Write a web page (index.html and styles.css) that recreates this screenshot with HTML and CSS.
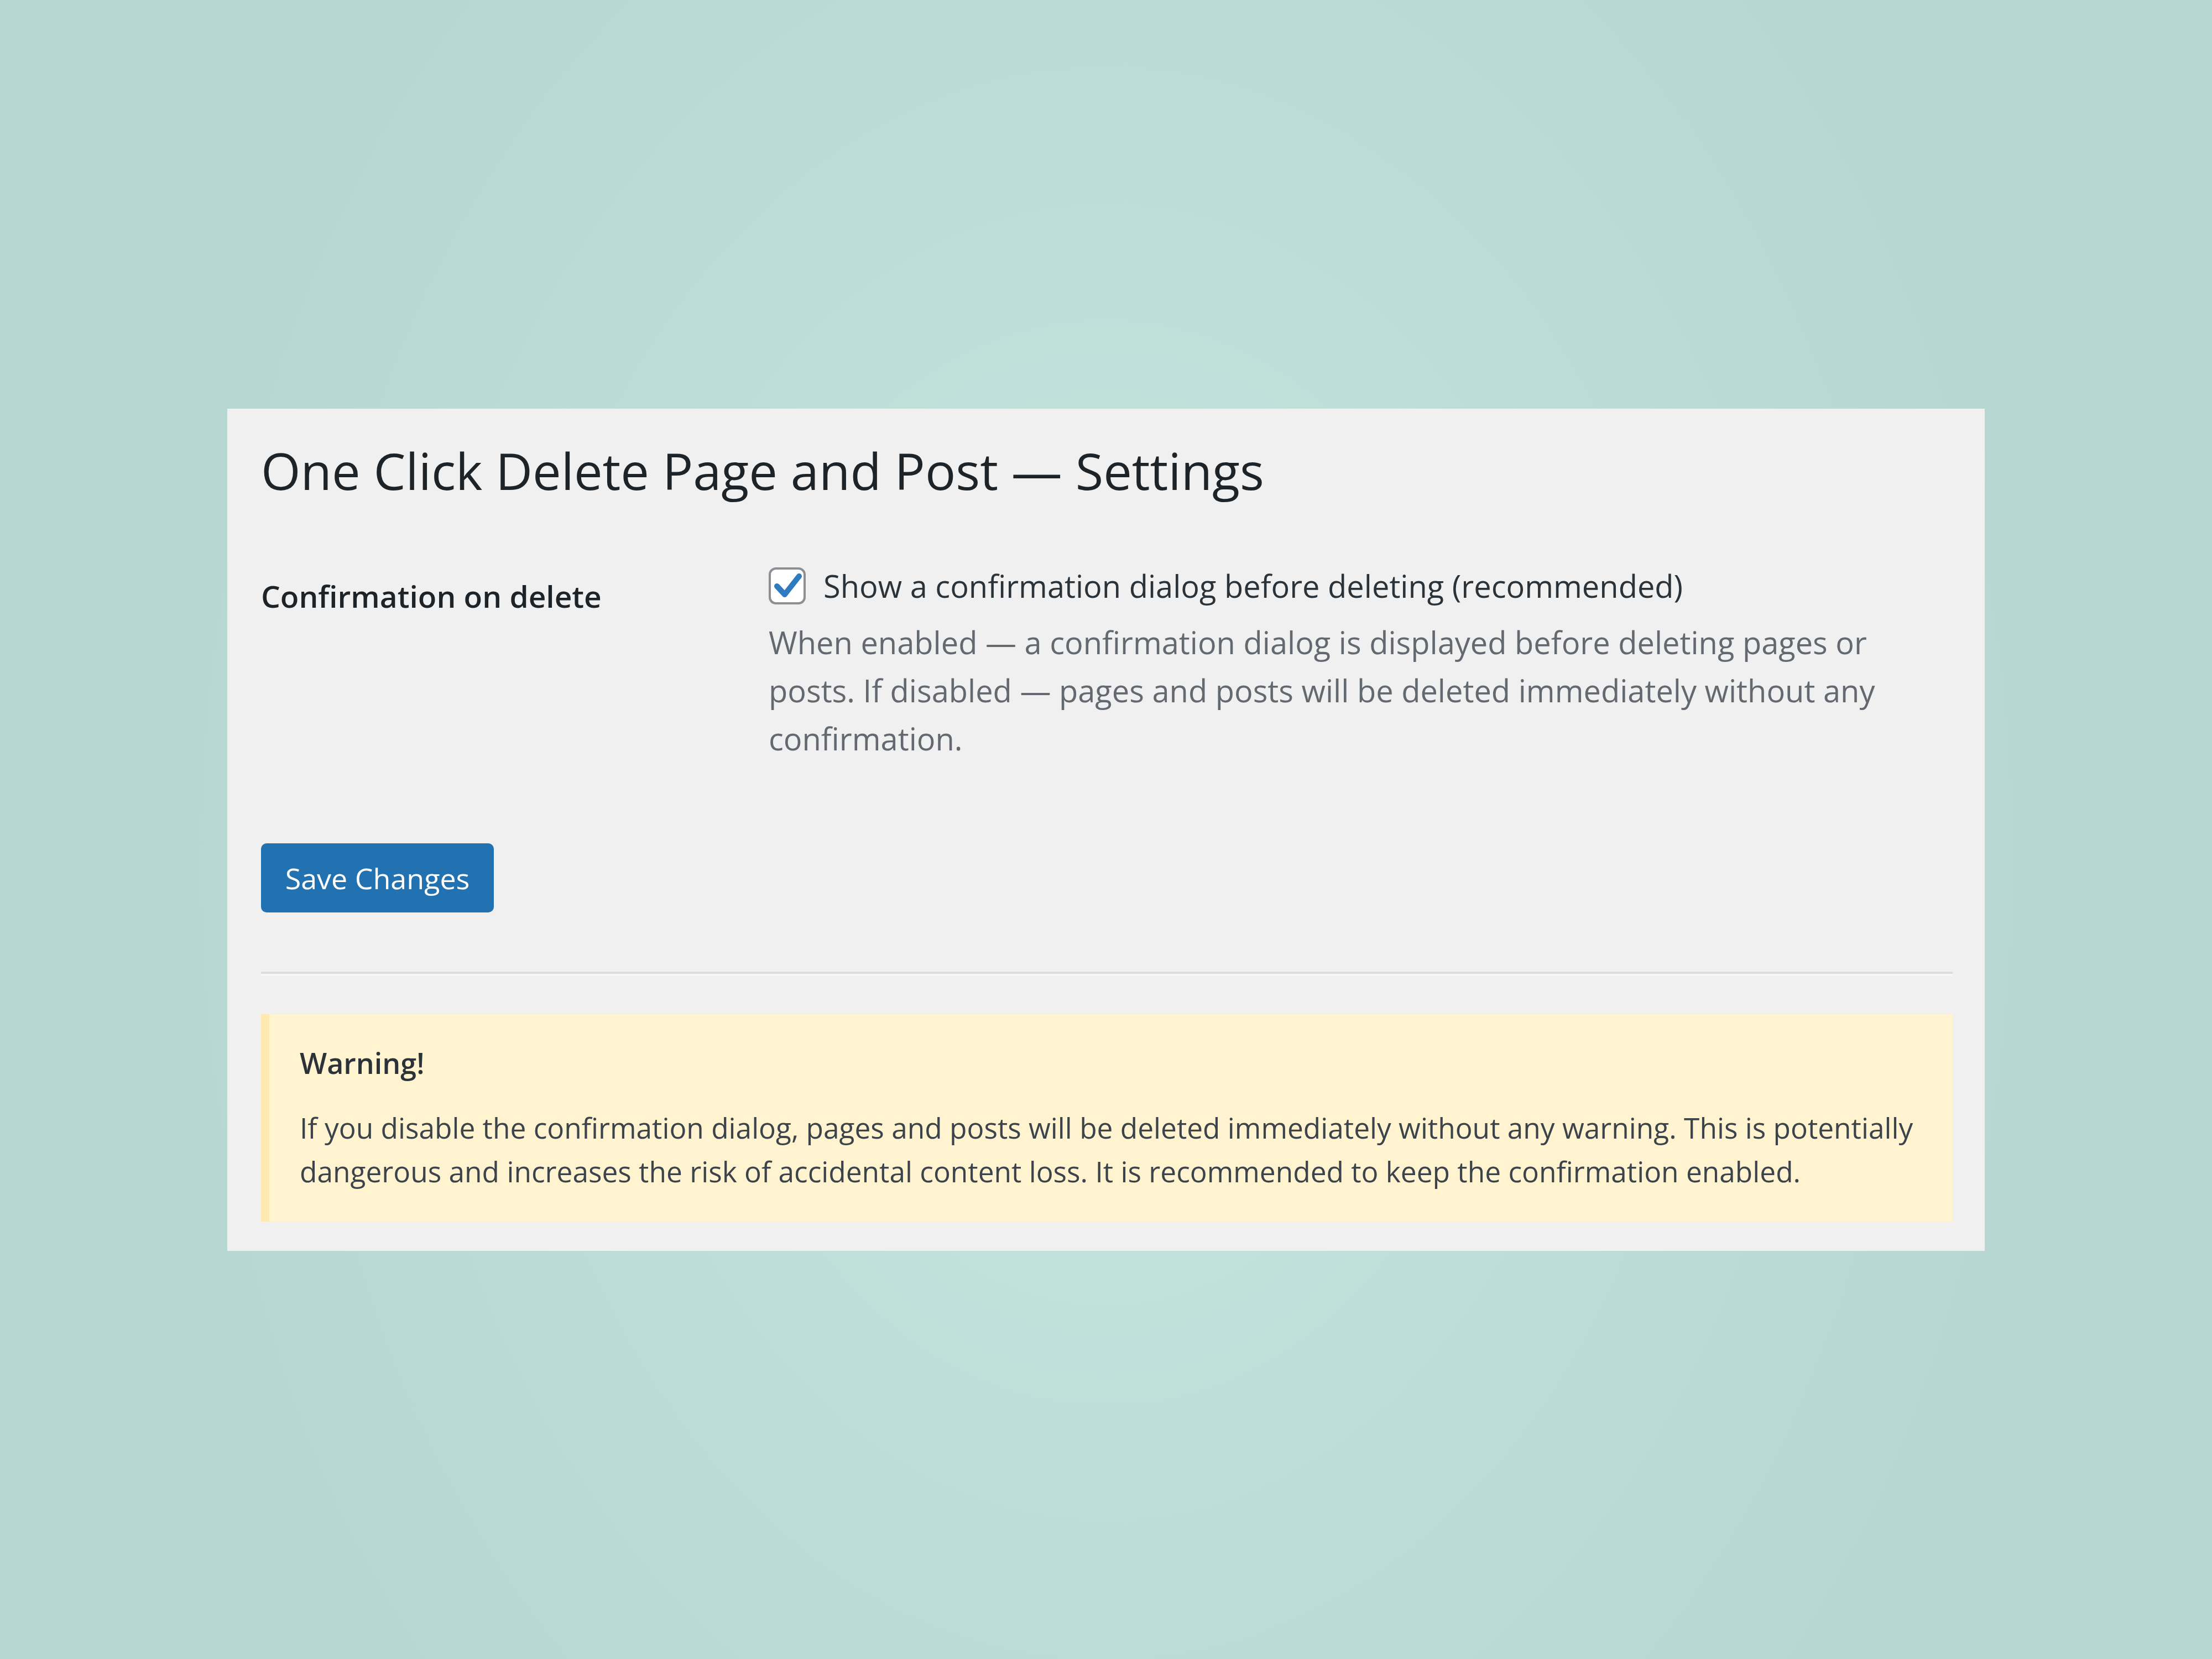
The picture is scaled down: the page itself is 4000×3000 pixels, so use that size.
FILE: index.html
```html
<!DOCTYPE html>
<html lang="en">
<head>
<meta charset="utf-8">
<title>One Click Delete Page and Post — Settings</title>
<link rel="stylesheet" href="styles.css">
</head>
<body>
<div class="stage">
  <div class="panel">
    <h1 class="title">One Click Delete Page and Post — Settings</h1>
    <div class="form-row">
      <div class="row-label">Confirmation on delete</div>
      <div class="row-field">
        <label class="check-line">
          <span class="checkbox">
            <svg viewBox="0 0 67 67" width="67" height="67" aria-hidden="true">
              <path d="M15 34 L29 49 L55 16" fill="none" stroke="#2f7bc0" stroke-width="10" stroke-linecap="round" stroke-linejoin="round"/>
            </svg>
          </span>
          <span class="check-text">Show a confirmation dialog before deleting (recommended)</span>
        </label>
        <p class="description">When enabled — a confirmation dialog is displayed before deleting pages or posts. If disabled — pages and posts will be deleted immediately without any confirmation.</p>
      </div>
    </div>
    <div class="submit">
      <button class="button-primary" type="button">Save Changes</button>
    </div>
    <hr class="divider">
    <div class="notice-warning">
      <p class="notice-title">Warning!</p>
      <p class="notice-text">If you disable the confirmation dialog, pages and posts will be deleted immediately without any warning. This is potentially dangerous and increases the risk of accidental content loss. It is recommended to keep the confirmation enabled.</p>
    </div>
  </div>
</div>
</body>
</html>
```

FILE: styles.css
```css
* { box-sizing: border-box; }

html, body {
  margin: 0;
  padding: 0;
}

body {
  width: 4000px;
  height: 3000px;
  font-family: "Open Sans", "Noto Sans", "Liberation Sans", sans-serif;
  background: radial-gradient(ellipse 1800px 2400px at 50% 52%, #c7e5df 0%, #bedfd9 45%, #b6d7d1 100%);
}

.stage {
  width: 4000px;
  height: 3000px;
  display: flex;
  align-items: center;
  justify-content: center;
}

.panel {
  width: 3178px;
  background: #f0f0f1;
  padding: 52px 58px 53px 61px;
}

.title {
  margin: 0 0 105px 0;
  font-size: 92px;
  line-height: 120px;
  font-weight: 400;
  color: #1d2327;
}

.form-row {
  display: grid;
  grid-template-columns: 918px 1fr;
}

.row-label {
  padding-top: 18px;
  font-size: 55px;
  line-height: 87px;
  font-weight: 600;
  color: #1d2327;
}

.check-line {
  display: flex;
  align-items: center;
  gap: 32px;
}

.checkbox {
  width: 67px;
  height: 67px;
  flex: none;
  border: 4px solid #8c8f94;
  border-radius: 13px;
  background: #ffffff;
  display: flex;
  align-items: center;
  justify-content: center;
}

.checkbox svg {
  display: block;
  width: 67px;
  height: 67px;
  flex: none;
}

.check-text {
  font-size: 56px;
  line-height: 87px;
  color: #2c3338;
}

.description {
  margin: 15px 0 0 0;
  max-width: 2060px;
  font-size: 56px;
  line-height: 87px;
  color: #646970;
}

.submit {
  margin-top: 146px;
}

.button-primary {
  height: 125px;
  width: 421px;
  padding: 0;
  border: 0;
  border-radius: 10px;
  background: #2271b1;
  color: #ffffff;
  font-family: "Open Sans", "Noto Sans", "Liberation Sans", sans-serif;
  font-size: 52px;
  line-height: 125px;
}

.divider {
  margin: 107px 0 69px 0;
  height: 0;
  border: 0;
  border-top: 4px solid #dcdcde;
  border-bottom: 4px solid #f6f7f7;
}

.notice-warning {
  background: #fff3d0;
  border-left: 15px solid #feeab0;
  padding: 48px 20px 51px 55px;
  color: #3c434a;
}

.notice-title {
  margin: 0 0 39px 0;
  font-size: 52px;
  line-height: 79px;
  font-weight: 600;
  color: #2c3338;
}

.notice-text {
  margin: 0;
  font-size: 51.4px;
  line-height: 79px;
}
```
